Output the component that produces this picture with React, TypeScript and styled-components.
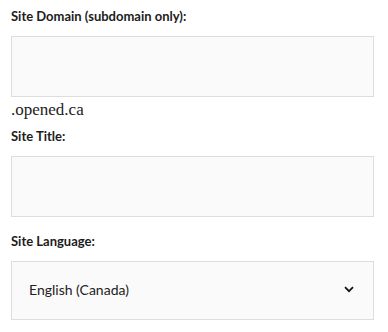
import styled, { createGlobalStyle } from "styled-components";

const GlobalStyle = createGlobalStyle`
  body {
    margin: 0;
    background: #ffffff;
  }
`;

const Form = styled.form`
  display: flex;
  flex-direction: column;
  padding: 7px 14px 0 11px;
  font-family: Lato, "Liberation Sans", sans-serif;
  color: #1c1c1c;
`;

const Field = styled.div<{ gap?: number }>`
  display: flex;
  flex-direction: column;
  margin-top: ${({ gap }) => gap ?? 0}px;
`;

const Label = styled.label`
  font-size: 13px;
  font-weight: 700;
  line-height: 18px;
  margin-bottom: 11px;
`;

const Input = styled.input`
  box-sizing: border-box;
  height: 61px;
  width: 100%;
  margin: 0;
  background: #fafafa;
  border: 1px solid #dddddd;
  border-radius: 0;
  outline: none;
`;

const Suffix = styled.span`
  font-family: "Liberation Serif", serif;
  font-size: 17px;
  line-height: 20px;
  color: #222;
  margin-top: 3px;
`;

const SelectBox = styled.div`
  box-sizing: border-box;
  height: 59px;
  display: flex;
  align-items: center;
  justify-content: space-between;
  padding: 0 19px 2px 17px;
  background: #fafafa;
  border: 1px solid #dddddd;
  font-size: 14px;
  color: #222;
`;

const Chevron = () => (
  <svg width="10" height="7" viewBox="0 0 10 7" fill="none">
    <path d="M1 1.2 L5 5.2 L9 1.2" stroke="#111" strokeWidth="1.7" />
  </svg>
);

export default function App() {
  return (
    <>
      <GlobalStyle />
      <Form>
        <Field>
          <Label>Site Domain (subdomain only):</Label>
          <Input type="text" />
          <Suffix>.opened.ca</Suffix>
        </Field>
        <Field gap={7}>
          <Label>Site Title:</Label>
          <Input type="text" />
        </Field>
        <Field gap={15}>
          <Label>Site Language:</Label>
          <SelectBox>
            <span>English (Canada)</span>
            <Chevron />
          </SelectBox>
        </Field>
      </Form>
    </>
  );
}
